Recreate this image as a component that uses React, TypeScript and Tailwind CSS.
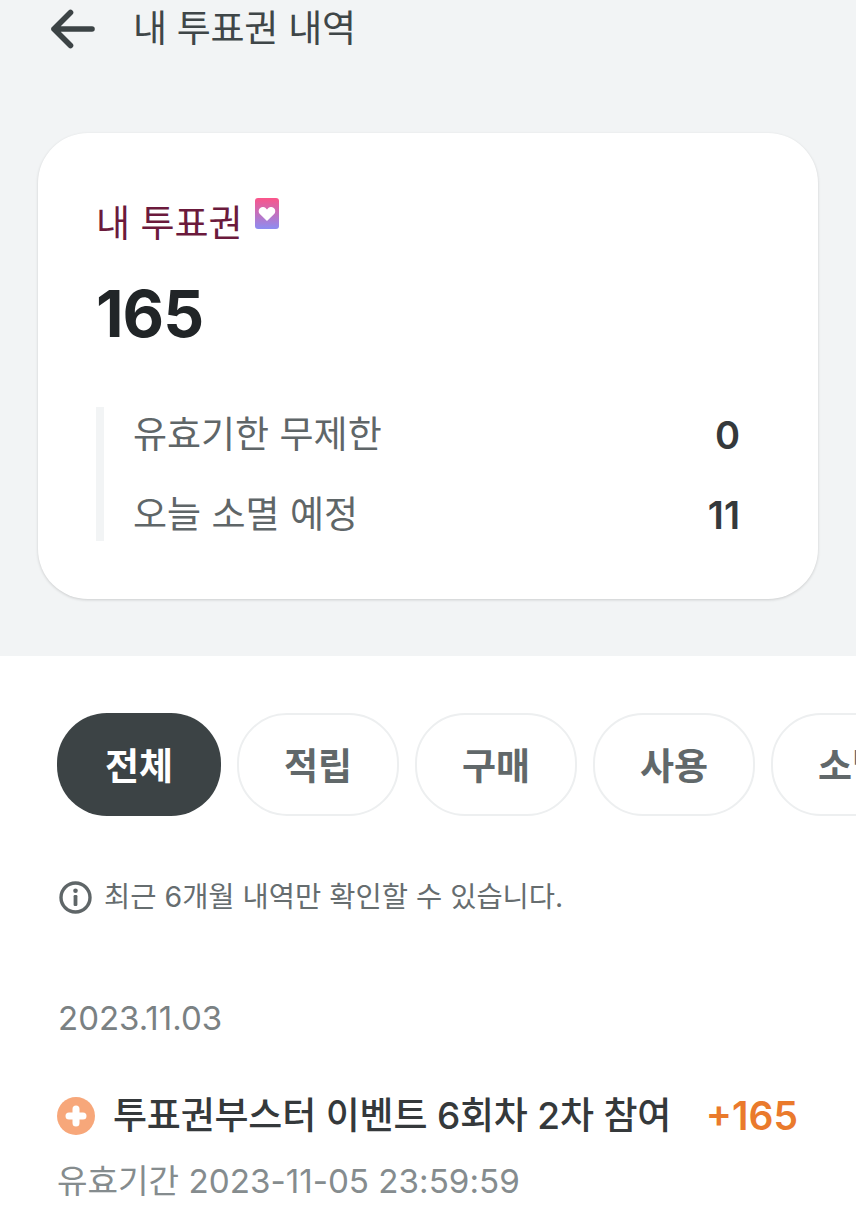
const font = "[font-family:Inter,'Noto_Sans_CJK_KR',sans-serif]";

const tabs = ['적립', '구매', '사용', '소멸'];

function BackArrow() {
  return (
    <svg width="44" height="40" viewBox="0 0 44 40" className="shrink-0" fill="none" stroke="#3c4345" strokeWidth="5.6" strokeLinecap="round" strokeLinejoin="round">
      <path d="M3 20 H41 M19.5 3.5 L3 20 L19.5 36.5" />
    </svg>
  );
}

function VoteIcon() {
  return (
    <svg width="24" height="31" viewBox="0 0 24 31" className="ml-[12px] mt-[-22px] shrink-0">
      <defs>
        <linearGradient id="vote" x1="0" y1="0" x2="0" y2="1">
          <stop offset="0" stopColor="#fb5489" />
          <stop offset="1" stopColor="#8c8df2" />
        </linearGradient>
      </defs>
      <rect width="24" height="31" rx="3" fill="url(#vote)" />
      <path d="M12 23 L4.6 15.8 C2.4 12.8 4.6 8.6 8.2 9 C9.8 9.2 11.2 10.2 12 11.6 C12.8 10.2 14.2 9.2 15.8 9 C19.4 8.6 21.6 12.8 19.4 15.8 Z" fill="#fff" />
    </svg>
  );
}

function Row({ label, value }: { label: string; value: string }) {
  return (
    <div className="flex items-center justify-between h-[52px]">
      <span className="text-[37px] text-[#5f6668]">{label}</span>
      <span className="text-[38px] font-semibold text-[#35393b]">{value}</span>
    </div>
  );
}

export default function App() {
  return (
    <div className={`w-[856px] h-[1229px] overflow-hidden bg-white ${font}`}>
      <section className="h-[656px] bg-[#f2f4f5] pt-[2px] px-[38px]">
        <header className="flex items-center h-[54px] pl-[13px]">
          <BackArrow />
          <h1 className="ml-[38px] text-[37px] leading-[54px] text-[#3f4648] font-normal tracking-[-0.3px]">내 투표권 내역</h1>
        </header>
        <div className="mt-[77px] h-[466px] rounded-[50px] bg-white shadow-[0_1px_3px_rgba(0,0,0,0.16)] pt-[64px] pl-[58px] pr-[78px]">
          <div className="flex items-center h-[54px]">
            <span className="text-[37px] leading-[54px] text-[#6b1a3c]">내 투표권</span>
            <VoteIcon />
          </div>
          <div className="mt-[23px] text-[64px] leading-[80px] font-bold text-[#212527] tracking-[-1px]">165</div>
          <div className="mt-[53px] border-l-[8px] border-[#f2f4f5] pl-[29px] pt-[2px] flex flex-col gap-[28px]">
            <Row label="유효기한 무제한" value="0" />
            <Row label="오늘 소멸 예정" value="11" />
          </div>
        </div>
      </section>

      <div className="flex gap-[16px] mt-[57px] pl-[57px] overflow-hidden">
        <div className="w-[164px] h-[103px] shrink-0 rounded-[50px] bg-[#3c4345] flex items-center justify-center pt-[4px] text-[37px] font-semibold text-white">
          전체
        </div>
        {tabs.map((t) => (
          <div
            key={t}
            className="w-[162px] h-[103px] shrink-0 rounded-[50px] border-2 border-[#edeff0] bg-white flex items-center justify-center pt-[4px] text-[37px] font-semibold text-[#61686a]"
          >
            {t}
          </div>
        ))}
      </div>

      <div className="flex items-center mt-[59px] pl-[59px] h-[44px]">
        <svg width="33" height="33" viewBox="0 0 33 33" className="shrink-0">
          <circle cx="16.5" cy="16.5" r="14.5" fill="none" stroke="#5f6668" strokeWidth="3.4" />
          <circle cx="16.5" cy="9.8" r="2.3" fill="#5f6668" />
          <rect x="14.6" y="14" width="3.8" height="11" rx="1.2" fill="#5f6668" />
        </svg>
        <span className="ml-[12px] text-[28.5px] text-[#666d6f]">최근 6개월 내역만 확인할 수 있습니다.</span>
      </div>

      <div className="mt-[77px] pl-[58px] text-[33px] leading-[44px] text-[#7a8183]">2023.11.03</div>

      <div className="mt-[49px] pl-[57px] pr-[58px] flex items-center h-[54px]">
        <svg width="38" height="38" viewBox="0 0 38 38" className="shrink-0">
          <circle cx="19" cy="19" r="19" fill="#f7a77a" />
          <path d="M19 12 V26 M12 19 H26" stroke="#fff" strokeWidth="7" strokeLinecap="round" />
        </svg>
        <span className="ml-[18px] text-[37px] font-medium text-[#35393b] tracking-[-0.2px] whitespace-nowrap">투표권부스터 이벤트 6회차 2차 참여</span>
        <span className="ml-auto text-[39px] font-semibold text-[#ea7a2c]">+165</span>
      </div>

      <div className="mt-[16px] pl-[57px] text-[33.2px] leading-[44px] text-[#858c8e]">유효기간 2023-11-05 23:59:59</div>
    </div>
  );
}
